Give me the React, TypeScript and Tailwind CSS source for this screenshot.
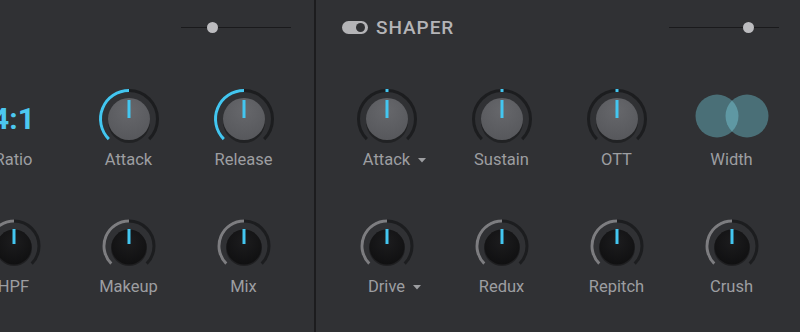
import React from "react";

const CYAN = "#43c6f0";
const TRACK = "#1c1d1f";

function pt(cx: number, cy: number, r: number, deg: number) {
  const a = (deg * Math.PI) / 180;
  return [cx + r * Math.sin(a), cy - r * Math.cos(a)];
}

function arc(cx: number, cy: number, r: number, from: number, to: number) {
  const [x1, y1] = pt(cx, cy, r, from);
  const [x2, y2] = pt(cx, cy, r, to);
  const large = to - from > 180 ? 1 : 0;
  return `M ${x1} ${y1} A ${r} ${r} 0 ${large} 1 ${x2} ${y2}`;
}

type KnobKind = "gray" | "bipolar" | "black";

function Knob({ kind }: { kind: KnobKind }) {
  const c = 32;
  if (kind === "black") {
    return (
      <svg width="64" height="64" viewBox="0 0 64 64">
        <defs>
          <radialGradient id="blk" cx="50%" cy="35%" r="65%">
            <stop offset="0%" stopColor="#1c1c1e" />
            <stop offset="100%" stopColor="#101011" />
          </radialGradient>
        </defs>
        <path d={arc(c, c, 25, -135, 135)} stroke={TRACK} strokeWidth="3" fill="none" />
        <path d={arc(c, c, 25, -135, 0)} stroke="#7d7d80" strokeWidth="3" fill="none" />
        <circle cx={c} cy={c + 2} r="18" fill="#000" opacity="0.35" />
        <circle cx={c} cy={c + 1} r="17.5" fill="url(#blk)" />
        <rect x={c - 1.5} y={c - 17} width="3" height="15" fill={CYAN} />
      </svg>
    );
  }
  return (
    <svg width="64" height="64" viewBox="0 0 64 64">
      <defs>
        <radialGradient id="gry" cx="50%" cy="30%" r="70%">
          <stop offset="0%" stopColor="#66676b" />
          <stop offset="100%" stopColor="#57585c" />
        </radialGradient>
      </defs>
      <path d={arc(c, c, 28.5, -135, 135)} stroke={TRACK} strokeWidth="3" fill="none" />
      {kind === "gray" ? (
        <path d={arc(c, c, 28.5, -135, 0)} stroke={CYAN} strokeWidth="3" fill="none" />
      ) : (
        <rect x={c - 1.5} y={c - 30} width="3" height="3" fill={CYAN} />
      )}
      <circle cx={c} cy={c + 3} r="21" fill="#000" opacity="0.3" />
      <circle cx={c} cy={c} r="21" fill="url(#gry)" />
      <rect x={c - 1.5} y={c - 19} width="3" height="18" fill={CYAN} />
    </svg>
  );
}

function Label({ text, menu }: { text: string; menu?: boolean }) {
  return (
    <div className="-mt-px h-5 text-[16.5px] leading-5 text-[#9d9ea1]">
      <span className="relative">
        {text}
        {menu ? (
          <svg
            className="absolute left-full top-[8px] ml-[8px]"
            width="8"
            height="5"
            viewBox="0 0 8 5"
          >
            <path d="M0 0 H8 L4 4.5 Z" fill="#9d9ea1" />
          </svg>
        ) : null}
      </span>
    </div>
  );
}

function Column({ children }: { children: React.ReactNode }) {
  return <div className="flex w-[115px] shrink-0 flex-col items-center">{children}</div>;
}

function HeaderSlider({ pos }: { pos: number }) {
  return (
    <div className="relative h-px w-[110px] bg-[#1a1a1c]">
      <div
        className="absolute top-[-5px] h-[11px] w-[11px] rounded-full bg-[#bcbcbf]"
        style={{ left: pos - 5.5 }}
      />
    </div>
  );
}

function WidthCircles() {
  return (
    <svg width="80" height="64" viewBox="0 0 80 64">
      <circle cx="25" cy="29" r="21.5" fill="#4a6f77" />
      <circle cx="55" cy="29" r="21.5" fill="#4a6f77" />
      <clipPath id="lens">
        <circle cx="25" cy="29" r="21.5" />
      </clipPath>
      <circle cx="55" cy="29" r="21.5" fill="#5f98a3" clipPath="url(#lens)" />
    </svg>
  );
}

export default function App() {
  return (
    <div
      className="flex h-[332px] w-[800px] overflow-hidden bg-[#303134]"
      style={{ fontFamily: "Roboto, 'Liberation Sans', sans-serif" }}
    >
      <section className="flex w-[316px] shrink-0 flex-col border-r-2 border-[#1c1c1e]">
        <div className="flex h-[54px] items-center justify-end pr-[23px]">
          <HeaderSlider pos={31} />
        </div>
        <div className="ml-[-44px] flex pt-[33px]">
          <Column>
            <div className="flex h-16 items-center text-[30px] font-bold leading-none text-[#4cc8f0]">
              4:1
            </div>
            <Label text="Ratio" />
          </Column>
          <Column>
            <Knob kind="gray" />
            <Label text="Attack" />
          </Column>
          <Column>
            <Knob kind="gray" />
            <Label text="Release" />
          </Column>
        </div>
        <div className="ml-[-44px] mt-[44px] flex">
          <Column>
            <Knob kind="black" />
            <Label text="HPF" />
          </Column>
          <Column>
            <Knob kind="black" />
            <Label text="Makeup" />
          </Column>
          <Column>
            <Knob kind="black" />
            <Label text="Mix" />
          </Column>
        </div>
      </section>

      <section className="flex flex-1 flex-col">
        <div className="flex h-[54px] items-center pl-[26px] pr-[21px]">
          <div className="relative h-[13px] w-[26px] rounded-full bg-[#b4b4b7]">
            <div className="absolute right-[3px] top-[2px] h-[9px] w-[9px] rounded-full bg-[#303134]" />
          </div>
          <span className="ml-[8px] text-[19px] font-medium leading-none tracking-[0.05em] text-[#b4b4b7]">
            SHAPER
          </span>
          <div className="flex-1" />
          <HeaderSlider pos={79} />
        </div>
        <div className="flex pl-[13px] pt-[33px]">
          <Column>
            <Knob kind="bipolar" />
            <Label text="Attack" menu />
          </Column>
          <Column>
            <Knob kind="bipolar" />
            <Label text="Sustain" />
          </Column>
          <Column>
            <Knob kind="bipolar" />
            <Label text="OTT" />
          </Column>
          <Column>
            <WidthCircles />
            <Label text="Width" />
          </Column>
        </div>
        <div className="mt-[44px] flex pl-[13px]">
          <Column>
            <Knob kind="black" />
            <Label text="Drive" menu />
          </Column>
          <Column>
            <Knob kind="black" />
            <Label text="Redux" />
          </Column>
          <Column>
            <Knob kind="black" />
            <Label text="Repitch" />
          </Column>
          <Column>
            <Knob kind="black" />
            <Label text="Crush" />
          </Column>
        </div>
      </section>
    </div>
  );
}
